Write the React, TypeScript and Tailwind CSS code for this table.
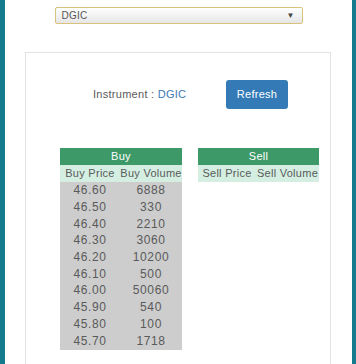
const buyRows = [
  ['46.60', '6888'],
  ['46.50', '330'],
  ['46.40', '2210'],
  ['46.30', '3060'],
  ['46.20', '10200'],
  ['46.10', '500'],
  ['46.00', '50060'],
  ['45.90', '540'],
  ['45.80', '100'],
  ['45.70', '1718'],
];

export default function App() {
  return (
    <div
      className="h-[364px] w-[356px] overflow-hidden bg-white border-l-[5px] border-r-[4px] border-[#147b8d] text-[#5a5a5a]"
      style={{ fontFamily: '"Liberation Sans", Arial, sans-serif' }}
    >
      {/* Instrument select */}
      <div className="pt-[7px]">
        <div className="mx-auto flex h-[17px] w-[248px] items-center justify-between rounded-[2px] border border-[#d8c27c] bg-gradient-to-b from-white to-[#e6e6e6] pl-[6px] pr-[7px]">
          <span className="text-[10px] tracking-wide text-[#555]">DGIC</span>
          <span className="text-[8px] text-[#444]">▼</span>
        </div>
      </div>

      {/* Card */}
      <div className="ml-[20px] mt-[28px] h-[320px] w-[306px] border border-[#e3e3e3] bg-white">
        <div className="mt-[27px] flex items-center">
          <div className="ml-[67px] w-[133px] text-[11px] tracking-wide">
            Instrument : <span className="text-[#3a7bb5]">DGIC</span>
          </div>
          <button className="h-[29px] w-[62px] rounded-[3px] bg-[#337ab7] text-[11px] tracking-wide text-white">
            Refresh
          </button>
        </div>

        <div className="ml-[34px] mt-[39px] flex gap-[16px]">
          {/* Buy */}
          <div className="w-[122px]">
            <div className="flex h-[17px] items-center justify-center bg-[#3d9a68] text-[11px] tracking-wide text-white">Buy</div>
            <div className="flex h-[17px] bg-[#d4efe2] text-[11px] tracking-wide">
              <div className="flex w-[60px] items-center justify-center">Buy Price</div>
              <div className="flex flex-1 items-center justify-center">Buy Volume</div>
            </div>
            <div className="bg-[#cdcdcd] pb-[1px]">
              {buyRows.map(([price, vol]) => (
                <div key={price} className="flex h-[16.7px] text-[12px] tracking-wider">
                  <div className="flex w-[60px] items-center justify-center">{price}</div>
                  <div className="flex flex-1 items-center justify-center">{vol}</div>
                </div>
              ))}
            </div>
          </div>

          {/* Sell */}
          <div className="w-[121px]">
            <div className="flex h-[17px] items-center justify-center bg-[#3d9a68] text-[11px] tracking-wide text-white">Sell</div>
            <div className="flex h-[17px] bg-[#d4efe2] text-[11px] tracking-wide">
              <div className="flex w-[58px] items-center justify-center">Sell Price</div>
              <div className="flex flex-1 items-center justify-center">Sell Volume</div>
            </div>
          </div>
        </div>
      </div>
    </div>
  );
}
